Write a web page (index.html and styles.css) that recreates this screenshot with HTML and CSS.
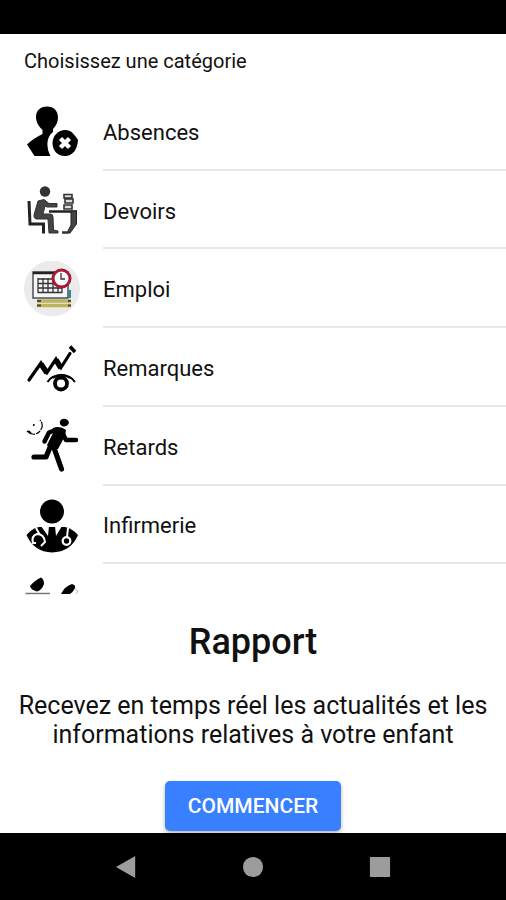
FILE: index.html
```html
<!DOCTYPE html>
<html lang="fr">
<head>
<meta charset="utf-8">
<meta name="viewport" content="width=device-width, initial-scale=1">
<title>Rapport</title>
<link rel="stylesheet" href="styles.css">
</head>
<body>
<div class="status-bar"></div>
<main class="slide">
  <section class="categories">
    <h2 class="list-header">Choisissez une catégorie</h2>
    <ul class="list">
      <li class="item">
        <svg class="avatar" viewBox="0 0 56 56" aria-hidden="true">
          <path d="M23 3.500C30 3.500 34 8 34 14.500C34 19 32 23 29 26L29 29C25 32 23 37 23.500 43C23.800 47 25 50 26.500 53H10.500L3 41.500C7 37 13 34 18.500 31V27C14.500 23 12 19 12 14C12 8 16 3.500 23 3.500Z"/>
          <path d="M41.500 27C47 27 50 31 54 37C53.500 46 49 53 41 53C33 53 28.500 47 28.500 40C28.500 33 34 27 41.500 27Z"/>
          <path d="M36.500 35.500L45.500 44.500M45.500 35.500L36.500 44.500" stroke="#fff" stroke-width="4.500"/>
        </svg>
        <span class="label">Absences</span>
      </li>
      <li class="item">
        <svg class="avatar" viewBox="0 0 56 56" fill="none" stroke="#333" aria-hidden="true">
          <circle cx="21" cy="9.500" r="5.200" fill="#333" stroke="none"/>
          <path d="M5 19L6 42H19.500V51.500" stroke="#222" stroke-width="3"/>
          <path d="M14 19L20 17.500L25 21.500H33V25H23L21 24L19 32H26Q29 32 29 35L29.500 48L34 49V51H25L24 37H12Q9.500 36 10 33Z" fill="#444" stroke-width="1"/>
          <path d="M25 29.500H53" stroke="#222" stroke-width="2.500"/>
          <path d="M47 29H52.500V42L46 51H43L47 43Z" fill="#444" stroke="#222"/>
          <path d="M38 50.500H44" stroke-width="2.500"/>
          <path d="M40 12.500H48V16H40ZM41 17H49V21H41ZM40 23H48V27H40Z" fill="#ddd" stroke-width="1.600"/>
        </svg>
        <span class="label">Devoirs</span>
      </li>
      <li class="item">
        <svg class="avatar" viewBox="0 0 56 56" fill="none" aria-hidden="true">
          <circle cx="28" cy="27.500" r="28" fill="#ebebeb"/>
          <rect x="9" y="11" width="35" height="26" fill="#f6f6f6" stroke="#4c5258" stroke-width="1.500"/>
          <path d="M9 12H32" stroke="#222" stroke-width="2.500"/>
          <path d="M14 18H30M14 22.500H38M14 27H38M14 31.500H38M14 17V32M19 17V32M24 17V32M29 17V32M34 22V32M38 26V32" stroke="#333" stroke-width="1.300"/>
          <path d="M45.500 29V37" stroke="#2f8a90" stroke-width="3"/>
          <path d="M13 40H47M13 44.500H47" stroke="#bdb25d" stroke-width="3.500"/>
          <path d="M13 40H17M44 40H47M13 44.500H17M44 44.500H47" stroke="#514b2c" stroke-width="2"/>
          <circle cx="37.500" cy="17.500" r="8.500" fill="#fafafa" stroke="#a71935" stroke-width="3"/>
          <path d="M37 12V18H41" stroke="#333" stroke-width="1.300"/>
        </svg>
        <span class="label">Emploi</span>
      </li>
      <li class="item">
        <svg class="avatar" viewBox="0 0 56 56" fill="none" stroke="#000" aria-hidden="true">
          <path d="M5 41L17 24L23 33.500L32 20L37 28.500L46 14.500" stroke-width="3.200" stroke-linecap="round"/>
          <path d="M17 25L23 34M32 21L37 29" stroke-width="5.500"/>
          <path d="M46 7.500L51 13" stroke-width="3.500"/>
          <circle cx="37" cy="44.500" r="6" stroke-width="3.800"/>
          <path d="M23.500 43C29 34 45 34 51 43" stroke-width="2"/>
          <path d="M29 39C34 35 41 35 46 39" stroke-width="2"/>
        </svg>
        <span class="label">Remarques</span>
      </li>
      <li class="item">
        <svg class="avatar" viewBox="0 0 56 56" fill="none" stroke="#000" aria-hidden="true">
          <path d="M38 1Q44 0 45 5Q43 9 39 8.500Q35 7 36 3Z" fill="#000" stroke="none"/>
          <path d="M29 10Q36 7 42 12L41 18L34 31L26 31L23 27L29 15Z" fill="#000" stroke="none"/>
          <path d="M33 11.500L25 14.500L20.500 23.500M38 14L42 22H52" stroke-width="4.500" stroke-linecap="round" stroke-linejoin="round"/>
          <path d="M27 27L22 39H10M29 27L37.500 51" stroke-width="5.200" stroke-linecap="round" stroke-linejoin="round"/>
          <path d="M3 13Q9 19 15 14Q21 8 16 2" stroke-width="1.200" stroke-dasharray="9 1 5 1"/>
          <path d="M4 13L7 15M9 7H10.500" stroke-width="1.800"/>
        </svg>
        <span class="label">Retards</span>
      </li>
      <li class="item">
        <svg class="avatar" viewBox="0 0 56 56" fill="none" stroke="#fff" aria-hidden="true">
          <circle cx="28" cy="14.500" r="12" fill="#000" stroke="none"/>
          <path d="M2.500 38Q7 32 15 30H41Q49 32 54 38Q47 55 28 55.500Q10 55 2.500 38Z" fill="#000" stroke="none"/>
          <path d="M17 29L24 39L25 29ZM31 29L32 39L38 29Z" fill="#fff" stroke="none"/>
          <path d="M12 31L16 38M9 46Q7 39 13 37Q20 37 21 45L17 49M8 46H12M44 31L43 40" stroke-width="2"/>
          <circle cx="42.500" cy="44" r="3.800" stroke-width="2.300"/>
        </svg>
        <span class="label">Infirmerie</span>
      </li>
      <li class="item">
        <svg class="avatar" viewBox="0 0 56 56" aria-hidden="true">
          <path d="M6 10Q11 4 17 1.500Q20 3 20 8Q18 14 13 15.500Q7 14 6 10Z"/>
          <path d="M1.500 17.500H26" stroke="#777" stroke-width="1.500"/>
          <path d="M37 18Q41 10 48 8Q52 9 51 12Q49 16 46 18Z"/>
          <path d="M51 13L54 15L52 18" fill="none" stroke="#bbb"/>
        </svg>
      </li>
    </ul>
  </section>
  <section class="intro">
    <h1 class="title">Rapport</h1>
    <p class="text">Recevez en temps réel les actualités et les informations relatives à votre enfant</p>
    <button class="start" type="button">COMMENCER</button>
  </section>
</main>
<nav class="nav-bar" aria-label="Navigation">
  <button class="nav-button" type="button" aria-label="Retour"><svg class="nav-icon" viewBox="0 0 24 24"><path d="M1 12L22 0V24Z"/></svg></button>
  <button class="nav-button" type="button" aria-label="Accueil"><svg class="nav-icon" viewBox="0 0 24 24"><circle cx="12" cy="12" r="11"/></svg></button>
  <button class="nav-button" type="button" aria-label="Applications"><svg class="nav-icon" viewBox="0 0 24 24"><rect x="1" y="1" width="22" height="22" rx="1"/></svg></button>
</nav>
</body>
</html>
```
FILE: styles.css
```css
* {
  box-sizing: border-box;
}

body {
  margin: 0;
  min-height: 100vh;
  display: flex;
  flex-direction: column;
  background: #fff;
  color: #111;
  font-family: Roboto, sans-serif;
}

.status-bar {
  height: 34px;
  background: #000;
}

.slide {
  flex: 1;
  display: flex;
  flex-direction: column;
}

.categories {
  height: 561px;
  overflow: hidden;
}

.list-header {
  margin: 0;
  padding: 15px 24px 19px;
  font-size: 20px;
  line-height: 24px;
  font-weight: 400;
}

/* Seven equal rows; the last one is cut off by the section */
.list {
  height: 551px;
  margin: 0;
  padding: 0 0 0 24px;
  list-style: none;
  display: grid;
  grid-auto-rows: 1fr;
}

.item {
  display: flex;
  align-items: center;
  gap: 23px;
}

.avatar {
  width: 56px;
  height: 56px;
  flex: none;
}

.label {
  flex: 1;
  align-self: stretch;
  display: flex;
  align-items: center;
  padding-top: 4px;
  border-bottom: 2px solid #e8e8e8;
  font-size: 22px;
}

.intro {
  padding: 24px 12px 0;
  text-align: center;
}

.title {
  margin: 0;
  font-size: 36px;
  line-height: 46px;
  font-weight: 500;
}

.text {
  margin: 26px 0 32px;
  font-size: 25px;
  line-height: 29px;
}

.start {
  height: 50px;
  padding: 0 23px;
  border: 0;
  border-radius: 5px;
  background: #3880ff;
  box-shadow: 0 2px 4px rgba(0, 0, 0, 0.3);
  color: #fff;
  font: 500 21px Roboto, sans-serif;
}

.nav-bar {
  height: 67px;
  padding: 0 62px;
  display: flex;
  background: #000;
}

.nav-button {
  flex: 1;
  padding: 0;
  border: 0;
  background: none;
  display: flex;
  align-items: center;
  justify-content: center;
}

.nav-icon {
  width: 22px;
  height: 22px;
  fill: #9c9c9c;
}
```
